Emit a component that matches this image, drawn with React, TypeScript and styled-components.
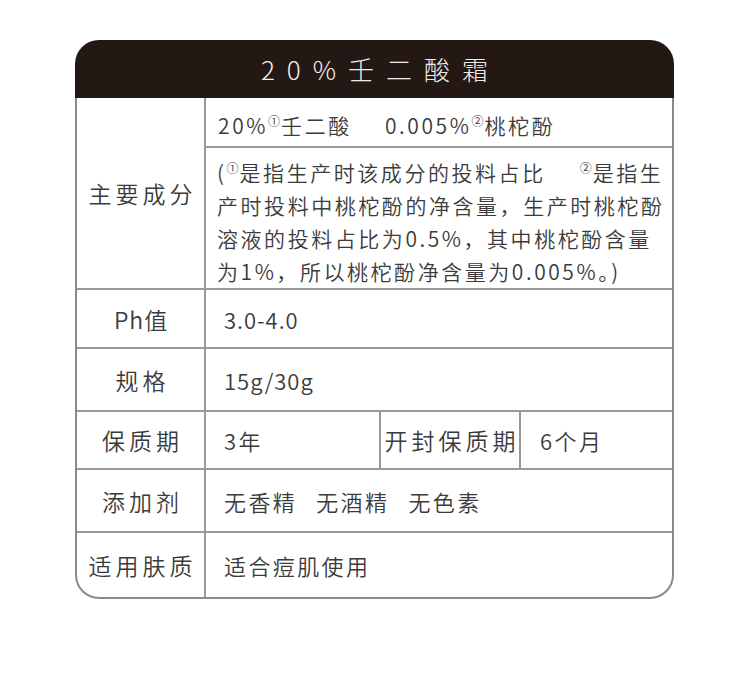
import React from "react";
import styled, { createGlobalStyle } from "styled-components";

const Global = createGlobalStyle`
  *, *::before, *::after { box-sizing: border-box; }
  html, body { margin: 0; padding: 0; background: #ffffff; }
  body { font-family: "Noto Sans CJK SC", "Noto Sans", sans-serif; color: #3b3b3b; font-weight: 350; }
`;

const Page = styled.div`
  padding: 40px 0 0 75px;
  height: 700px;
`;

const Card = styled.div`
  width: 599px;
`;

const Header = styled.div`
  height: 58px;
  background: #241815;
  border-radius: 24px 24px 0 0;
  display: flex;
  align-items: center;
  justify-content: center;
`;

const Title = styled.h1`
  margin: 0;
  padding-left: 12px;
  font-size: 26px;
  font-weight: 300;
  letter-spacing: 12px;
  color: #f1ece9;
  line-height: 1;
`;

const Body = styled.div`
  border: 2px solid #8a8a8a;
  border-top: none;
  border-radius: 0 0 24px 24px;
  overflow: hidden;
`;

const Row = styled.div<{ $h: number; $cols?: string; $last?: boolean }>`
  display: grid;
  grid-template-columns: ${(p) => p.$cols ?? "129px 1fr"};
  height: ${(p) => p.$h}px;
  border-bottom: ${(p) => (p.$last ? "none" : "2px solid #999")};
`;

const Label = styled.div<{ $right?: boolean }>`
  display: flex;
  align-items: center;
  justify-content: center;
  padding-left: 4px;
  font-size: 23px;
  letter-spacing: 4px;
  color: #3b3b3b;
  border-right: ${(p) => (p.$right ? "2px solid #999" : "none")};
  white-space: nowrap;
`;

const Latin = styled.span`
  letter-spacing: 1px;
`;

const Value = styled.div<{ $pad?: number; $right?: boolean }>`
  display: flex;
  align-items: center;
  padding-left: ${(p) => p.$pad ?? 18}px;
  font-size: 22px;
  letter-spacing: 2.4px;
  color: #3b3b3b;
  white-space: nowrap;
  border-right: ${(p) => (p.$right ? "2px solid #999" : "none")};
`;

const Stack = styled.div`
  display: flex;
  flex-direction: column;
`;

const IngredientLine = styled.div`
  height: 50px;
  border-bottom: 2px solid #999;
  display: flex;
  align-items: center;
  padding: 6px 0 0 12px;
  font-size: 21px;
  letter-spacing: 2.6px;
  white-space: nowrap;
`;

const Ingredient = styled.span<{ $gap?: number }>`
  margin-left: ${(p) => p.$gap ?? 0}px;
`;

const Sup = styled.span`
  font-size: 12px;
  letter-spacing: 1px;
  vertical-align: 8px;
`;

const Note = styled.div`
  flex: 1;
  padding: 3px 0 0 11px;
  font-size: 21px;
  letter-spacing: 2.55px;
  line-height: 33px;
  white-space: nowrap;
`;

const NoteLine = styled.div``;

const Tags = styled.div`
  display: flex;
  gap: 19px;
`;

export default function App() {
  return (
    <>
      <Global />
      <Page>
        <Card>
          <Header>
            <Title>20%壬二酸霜</Title>
          </Header>
          <Body>
            <Row $h={192}>
              <Label $right>主要成分</Label>
              <Stack>
                <IngredientLine>
                  <Ingredient>
                    20%<Sup>①</Sup>壬二酸
                  </Ingredient>
                  <Ingredient $gap={33}>
                    0.005%<Sup>②</Sup>桃柁酚
                  </Ingredient>
                </IngredientLine>
                <Note>
                  <NoteLine>
                    (<Sup>①</Sup>是指生产时该成分的投料占比
                    <Ingredient $gap={34}>
                      <Sup>②</Sup>是指生
                    </Ingredient>
                  </NoteLine>
                  <NoteLine>产时投料中桃柁酚的净含量，生产时桃柁酚</NoteLine>
                  <NoteLine>溶液的投料占比为0.5%，其中桃柁酚含量</NoteLine>
                  <NoteLine>为1%，所以桃柁酚净含量为0.005%。)</NoteLine>
                </Note>
              </Stack>
            </Row>
            <Row $h={59}>
              <Label $right>
                <Latin>Ph</Latin>值
              </Label>
              <Value>
                <Latin>3.0-4.0</Latin>
              </Value>
            </Row>
            <Row $h={63}>
              <Label $right>规格</Label>
              <Value>
                <Latin>15g/30g</Latin>
              </Value>
            </Row>
            <Row $h={58} $cols="129px 175px 140px 1fr">
              <Label $right>保质期</Label>
              <Value $right>3年</Value>
              <Label $right>开封保质期</Label>
              <Value $pad={19}>6个月</Value>
            </Row>
            <Row $h={63}>
              <Label $right>添加剂</Label>
              <Value>
                <Tags>
                  <span>无香精</span>
                  <span>无酒精</span>
                  <span>无色素</span>
                </Tags>
              </Value>
            </Row>
            <Row $h={64} $last>
              <Label $right>适用肤质</Label>
              <Value>适合痘肌使用</Value>
            </Row>
          </Body>
        </Card>
      </Page>
    </>
  );
}
